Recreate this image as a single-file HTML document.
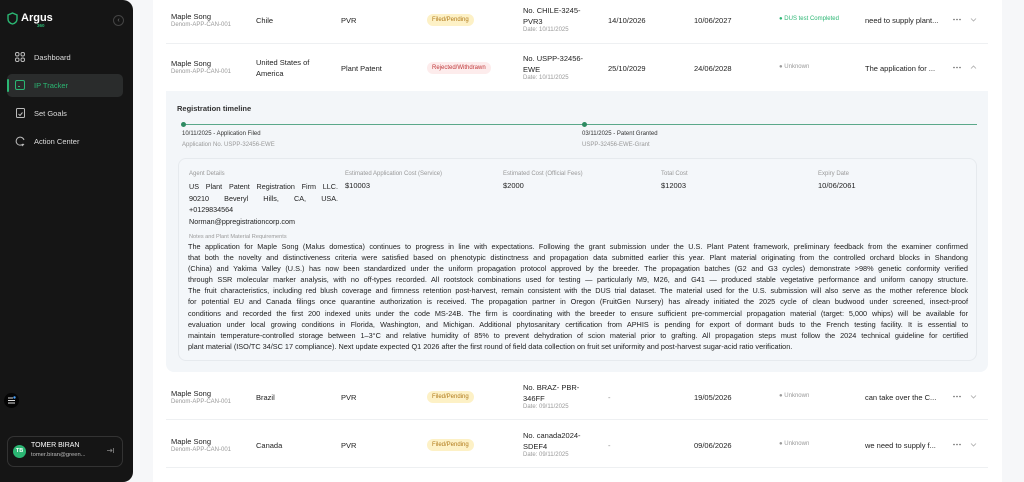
<!DOCTYPE html>
<html><head><meta charset="utf-8">
<style>
*{box-sizing:border-box;margin:0;padding:0}
body{width:1024px;height:482px;overflow:hidden;background:#f6f7f9;font-family:"Liberation Sans",sans-serif;color:#222;position:relative}
.a{position:absolute;white-space:nowrap}
#side{position:absolute;left:0;top:0;width:133px;height:482px;background:#151515;border-radius:0 10px 10px 0}
#main{position:absolute;left:153px;top:0;width:849px;height:482px;background:#fff}
.t8{font-size:7.5px;color:#222}
.sub{font-size:6px;color:#999}
.badge{position:absolute;font-size:6px;padding:3px 5px;border-radius:8px}
.fp{background:#fdf1c6;color:#b07a1a}
.rw{background:#fdecec;color:#c0393b}
.hr{position:absolute;left:166px;width:822px;height:1px;background:#eef0f2}
.nav{position:absolute;left:16px;font-size:7.5px;color:#ddd}
.notes{position:absolute;left:188px;top:241px;width:780px;font-size:7.3px;color:#1e1e1e;line-height:11.1px}
.notes div{height:11.1px;text-align:justify;text-align-last:justify;white-space:nowrap;overflow:visible}
</style></head><body>
<div id="side">
  <svg class="a" style="left:7px;top:12px" width="11" height="13" viewBox="0 0 11 13"><path d="M5.5 1 L10 3 V7 C10 10 7.5 11.5 5.5 12 C3.5 11.5 1 10 1 7 V3 Z" fill="none" stroke="#2bb673" stroke-width="1.4"/></svg>
  <div class="a" style="left:21px;top:12px;font-size:11px;font-weight:bold;color:#fff">Argus</div>
  <div class="a" style="left:37px;top:23px;font-size:4.5px;color:#2bb673;font-weight:bold">360</div>
  <div class="a" style="left:113px;top:15px;width:11px;height:11px;border:1px solid #444;border-radius:50%;color:#777;font-size:7px;line-height:9px;text-align:center">‹</div>
  <svg class="a" style="left:15px;top:52px" width="10" height="10" viewBox="0 0 10 10" fill="none" stroke="#bbb" stroke-width="1"><rect x="0.5" y="0.5" width="3.5" height="3.5" rx="1.5"/><rect x="6" y="0.5" width="3.5" height="3.5" rx="1.5"/><rect x="0.5" y="6" width="3.5" height="3.5" rx="1.5"/><rect x="6" y="6" width="3.5" height="3.5" rx="1.5"/></svg>
  <div class="nav" style="left:34px;top:53px">Dashboard</div>
  <div class="a" style="left:7px;top:74px;width:116px;height:23px;background:#2a2c2c;border-radius:5px"></div>
  <div class="a" style="left:7px;top:79px;width:2px;height:13px;background:#2bb673;border-radius:1px"></div>
  <svg class="a" style="left:15px;top:80px" width="10" height="10" viewBox="0 0 10 10" fill="none" stroke="#2bb673" stroke-width="1"><rect x="0.5" y="0.5" width="9" height="9" rx="1.5"/><path d="M3 6.5 h2"/></svg>
  <div class="nav" style="left:34px;top:81px;color:#2bb673">IP Tracker</div>
  <svg class="a" style="left:16px;top:108px" width="9" height="10" viewBox="0 0 9 10" fill="none" stroke="#bbb" stroke-width="1"><rect x="0.5" y="0.5" width="8" height="9" rx="1"/><path d="M2.5 6 l1.5 1.5 l2.5 -3"/></svg>
  <div class="nav" style="left:34px;top:109px">Set Goals</div>
  <svg class="a" style="left:15px;top:136px" width="11" height="11" viewBox="0 0 11 11" fill="none" stroke="#bbb" stroke-width="1"><path d="M9 4 A4 4 0 1 0 8 8"/><path d="M7 10 l2 -2"/></svg>
  <div class="nav" style="left:34px;top:137px">Action Center</div>
  <div class="a" style="left:4px;top:393px;width:15px;height:15px;border-radius:50%;background:#050505"></div>
  <svg class="a" style="left:7px;top:396px" width="9" height="9" viewBox="0 0 9 9" stroke="#ddd" stroke-width="1"><path d="M1 2h5M1 4.5h7M1 7h7"/><circle cx="7.5" cy="1.5" r="1.2" fill="#4aa3ff" stroke="none"/></svg>
  <div class="a" style="left:7px;top:436px;width:116px;height:31px;border:1px solid #333;border-radius:7px"></div>
  <div class="a" style="left:13px;top:445px;width:13px;height:13px;border-radius:50%;background:#2bb673;color:#fff;font-size:5.5px;font-weight:bold;text-align:center;line-height:13px">TB</div>
  <div class="a" style="left:31px;top:442px;font-size:7px;color:#fff">TOMER BIRAN</div>
  <div class="a" style="left:31px;top:452px;font-size:5.8px;color:#bbb">tomer.biran@green...</div>
  <svg class="a" style="left:106px;top:447px" width="8" height="7" viewBox="0 0 8 7" fill="none" stroke="#888" stroke-width="0.8"><path d="M1 3.5h5M4.5 2l1.5 1.5l-1.5 1.5M7.5 1v5"/></svg>
</div>
<div id="main"></div>

<!-- row 1 -->
<div class="a t8" style="left:171px;top:12px">Maple Song</div>
<div class="a sub" style="left:171px;top:22px">Denom-APP-CAN-001</div>
<div class="a t8" style="left:256px;top:16px">Chile</div>
<div class="a t8" style="left:341px;top:16px">PVR</div>
<div class="badge fp" style="left:427px;top:14px">Filed/Pending</div>
<div class="a t8" style="left:523px;top:6px">No. CHILE-3245-</div>
<div class="a t8" style="left:523px;top:17px">PVR3</div>
<div class="a sub" style="left:523px;top:27px">Date: 10/11/2025</div>
<div class="a t8" style="left:608px;top:16px">14/10/2026</div>
<div class="a t8" style="left:694px;top:16px">10/06/2027</div>
<div class="a" style="left:779px;top:16px;font-size:6px;color:#2bb673">● DUS test Completed</div>
<div class="a t8" style="left:865px;top:16px">need to supply plant...</div>
<svg class="a" style="left:953px;top:18px" width="8" height="3"><circle cx="1" cy="1.5" r="0.8" fill="#666"/><circle cx="4" cy="1.5" r="0.8" fill="#666"/><circle cx="7" cy="1.5" r="0.8" fill="#666"/></svg>
<svg class="a" style="left:970px;top:17px" width="7" height="5" viewBox="0 0 7 5"><path d="M1 1.5l2.5 2.5l2.5-2.5" fill="none" stroke="#aaa" stroke-width="0.8"/></svg>
<div class="hr" style="top:43px"></div>

<!-- row 2 -->
<div class="a t8" style="left:171px;top:59px">Maple Song</div>
<div class="a sub" style="left:171px;top:69px">Denom-APP-CAN-001</div>
<div class="a t8" style="left:256px;top:58px">United States of</div>
<div class="a t8" style="left:256px;top:69px">America</div>
<div class="a t8" style="left:341px;top:64px">Plant Patent</div>
<div class="badge rw" style="left:427px;top:62px">Rejected/Withdrawn</div>
<div class="a t8" style="left:523px;top:54px">No. USPP-32456-</div>
<div class="a t8" style="left:523px;top:65px">EWE</div>
<div class="a sub" style="left:523px;top:75px">Date: 10/11/2025</div>
<div class="a t8" style="left:608px;top:64px">25/10/2029</div>
<div class="a t8" style="left:694px;top:64px">24/06/2028</div>
<div class="a" style="left:779px;top:64px;font-size:6px;color:#999">● Unknown</div>
<div class="a t8" style="left:865px;top:64px">The application for ...</div>
<svg class="a" style="left:953px;top:66px" width="8" height="3"><circle cx="1" cy="1.5" r="0.8" fill="#666"/><circle cx="4" cy="1.5" r="0.8" fill="#666"/><circle cx="7" cy="1.5" r="0.8" fill="#666"/></svg>
<svg class="a" style="left:970px;top:65px" width="7" height="5" viewBox="0 0 7 5"><path d="M1 3.5l2.5-2.5l2.5 2.5" fill="none" stroke="#aaa" stroke-width="0.8"/></svg>

<!-- panel -->
<div class="a" style="left:166px;top:91px;width:822px;height:281px;background:#f3f6f9;border-radius:0 0 8px 8px"></div>
<div class="a" style="left:177px;top:104px;font-size:7.5px;font-weight:bold;color:#333">Registration timeline</div>
<div class="a" style="left:183px;top:124px;width:794px;height:1px;background:#5aa88a"></div>
<div class="a" style="left:181px;top:122px;width:5px;height:5px;border-radius:50%;background:#2e8b62"></div>
<div class="a" style="left:582px;top:122px;width:5px;height:5px;border-radius:50%;background:#2e8b62"></div>
<div class="a" style="left:182px;top:131px;font-size:6px;color:#333">10/11/2025 - Application Filed</div>
<div class="a sub" style="left:182px;top:142px">Application No. USPP-32456-EWE</div>
<div class="a" style="left:582px;top:131px;font-size:6px;color:#333">03/11/2025 - Patent Granted</div>
<div class="a sub" style="left:582px;top:142px">USPP-32456-EWE-Grant</div>

<div class="a" style="left:178px;top:158px;width:799px;height:203px;background:#f4f7fa;border:1px solid #e6eaee;border-radius:8px"></div>
<div class="a sub" style="left:189px;top:171px">Agent Details</div>
<div class="a" style="left:189px;top:181px;width:149px;font-size:7.2px;line-height:11.5px;color:#222;text-align:justify;white-space:normal">
<div style="text-align-last:justify">US Plant Patent Registration Firm LLC.</div><div style="text-align-last:justify">90210 Beveryl Hills, CA, USA.</div><div>+0129834564</div><div>Norman@ppregistrationcorp.com</div></div>
<div class="a sub" style="left:345px;top:171px">Estimated Application Cost (Service)</div>
<div class="a t8" style="left:345px;top:181px">$10003</div>
<div class="a sub" style="left:503px;top:171px">Estimated Cost (Official Fees)</div>
<div class="a t8" style="left:503px;top:181px">$2000</div>
<div class="a sub" style="left:661px;top:171px">Total Cost</div>
<div class="a t8" style="left:661px;top:181px">$12003</div>
<div class="a sub" style="left:818px;top:171px">Expiry Date</div>
<div class="a t8" style="left:818px;top:181px">10/06/2061</div>
<div class="a" style="left:189px;top:234px;font-size:5.6px;color:#999">Notes and Plant Material Requirements</div>
<div class="notes">
<div>The application for Maple Song (Malus domestica) continues to progress in line with expectations. Following the grant submission under the U.S. Plant Patent framework, preliminary feedback from the examiner confirmed</div>
<div>that both the novelty and distinctiveness criteria were satisfied based on phenotypic distinctness and propagation data submitted earlier this year. Plant material originating from the controlled orchard blocks in Shandong</div>
<div>(China) and Yakima Valley (U.S.) has now been standardized under the uniform propagation protocol approved by the breeder. The propagation batches (G2 and G3 cycles) demonstrate &gt;98% genetic conformity verified</div>
<div>through SSR molecular marker analysis, with no off-types recorded. All rootstock combinations used for testing — particularly M9, M26, and G41 — produced stable vegetative performance and uniform canopy structure.</div>
<div>The fruit characteristics, including red blush coverage and firmness retention post-harvest, remain consistent with the DUS trial dataset. The material used for the U.S. submission will also serve as the mother reference block</div>
<div>for potential EU and Canada filings once quarantine authorization is received. The propagation partner in Oregon (FruitGen Nursery) has already initiated the 2025 cycle of clean budwood under screened, insect-proof</div>
<div>conditions and recorded the first 200 indexed units under the code MS-24B. The firm is coordinating with the breeder to ensure sufficient pre-commercial propagation material (target: 5,000 whips) will be available for</div>
<div>evaluation under local growing conditions in Florida, Washington, and Michigan. Additional phytosanitary certification from APHIS is pending for export of dormant buds to the French testing facility. It is essential to</div>
<div>maintain temperature-controlled storage between 1–3°C and relative humidity of 85% to prevent dehydration of scion material prior to grafting. All propagation steps must follow the 2024 technical guideline for certified</div>
<div style="text-align-last:left">plant material (ISO/TC 34/SC 17 compliance). Next update expected Q1 2026 after the first round of field data collection on fruit set uniformity and post-harvest sugar-acid ratio verification.</div>
</div>

<!-- row 3 -->
<div class="a t8" style="left:171px;top:389px">Maple Song</div>
<div class="a sub" style="left:171px;top:399px">Denom-APP-CAN-001</div>
<div class="a t8" style="left:256px;top:393px">Brazil</div>
<div class="a t8" style="left:341px;top:393px">PVR</div>
<div class="badge fp" style="left:427px;top:391px">Filed/Pending</div>
<div class="a t8" style="left:523px;top:383px">No. BRAZ- PBR-</div>
<div class="a t8" style="left:523px;top:394px">346FF</div>
<div class="a sub" style="left:523px;top:404px">Date: 09/11/2025</div>
<div class="a t8" style="left:608px;top:393px;color:#888">-</div>
<div class="a t8" style="left:694px;top:393px">19/05/2026</div>
<div class="a" style="left:779px;top:393px;font-size:6px;color:#999">● Unknown</div>
<div class="a t8" style="left:865px;top:393px">can take over the C...</div>
<svg class="a" style="left:953px;top:395px" width="8" height="3"><circle cx="1" cy="1.5" r="0.8" fill="#666"/><circle cx="4" cy="1.5" r="0.8" fill="#666"/><circle cx="7" cy="1.5" r="0.8" fill="#666"/></svg>
<svg class="a" style="left:970px;top:394px" width="7" height="5" viewBox="0 0 7 5"><path d="M1 1.5l2.5 2.5l2.5-2.5" fill="none" stroke="#aaa" stroke-width="0.8"/></svg>
<div class="hr" style="top:419px"></div>

<!-- row 4 -->
<div class="a t8" style="left:171px;top:437px">Maple Song</div>
<div class="a sub" style="left:171px;top:447px">Denom-APP-CAN-001</div>
<div class="a t8" style="left:256px;top:441px">Canada</div>
<div class="a t8" style="left:341px;top:441px">PVR</div>
<div class="badge fp" style="left:427px;top:439px">Filed/Pending</div>
<div class="a t8" style="left:523px;top:431px">No. canada2024-</div>
<div class="a t8" style="left:523px;top:442px">SDEF4</div>
<div class="a sub" style="left:523px;top:452px">Date: 09/11/2025</div>
<div class="a t8" style="left:608px;top:441px;color:#888">-</div>
<div class="a t8" style="left:694px;top:441px">09/06/2026</div>
<div class="a" style="left:779px;top:441px;font-size:6px;color:#999">● Unknown</div>
<div class="a t8" style="left:865px;top:441px">we need to supply f...</div>
<svg class="a" style="left:953px;top:443px" width="8" height="3"><circle cx="1" cy="1.5" r="0.8" fill="#666"/><circle cx="4" cy="1.5" r="0.8" fill="#666"/><circle cx="7" cy="1.5" r="0.8" fill="#666"/></svg>
<svg class="a" style="left:970px;top:442px" width="7" height="5" viewBox="0 0 7 5"><path d="M1 1.5l2.5 2.5l2.5-2.5" fill="none" stroke="#aaa" stroke-width="0.8"/></svg>
<div class="hr" style="top:467px"></div>
</body></html>
